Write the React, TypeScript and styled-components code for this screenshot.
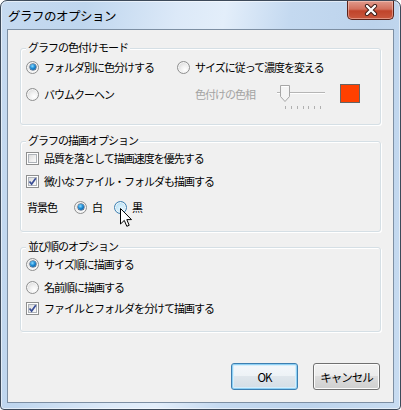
import React from 'react';
import styled, { createGlobalStyle } from 'styled-components';

const GlobalStyle = createGlobalStyle`
  html, body {
    margin: 0;
    padding: 0;
    background: #ffffff;
  }
  body {
    font-family: "Noto Sans CJK JP", "Noto Sans", sans-serif;
    font-size: 11px;
    color: #000;
  }
`;

const Window = styled.div`
  width: 401px;
  height: 410px;
  box-sizing: border-box;
  border: 1px solid #3d4a5a;
  border-radius: 7px 7px 4px 4px;
  background: linear-gradient(
    100deg,
    #c6daf0 0%,
    #bfd6ee 18%,
    #dce9f8 38%,
    #e3eefa 48%,
    #c4d9f0 62%,
    #bcd3ec 80%,
    #c8dcf1 100%
  );
  box-shadow: inset 0 0 0 1px rgba(255, 255, 255, 0.55);
  padding: 0 6px 6px;
  display: flex;
  flex-direction: column;
  overflow: hidden;
`;

const TitleBar = styled.div`
  height: 28px;
  display: flex;
  align-items: center;
  justify-content: space-between;
  padding-left: 1px;
`;

const Title = styled.div`
  font-size: 12.5px;
  letter-spacing: -0.5px;
  line-height: 16px;
  color: #000;
  margin-top: 1px;
`;

const CloseButton = styled.div`
  align-self: flex-start;
  width: 47px;
  height: 19px;
  box-sizing: border-box;
  border: 1px solid #5b231a;
  border-top: none;
  border-radius: 0 0 5px 5px;
  background: linear-gradient(#e09a8c 0%, #d2705d 45%, #c0442b 55%, #c9583e 100%);
  box-shadow: inset 0 0 0 1px rgba(255, 220, 210, 0.45);
  display: flex;
  align-items: center;
  justify-content: center;
`;

const Client = styled.div`
  flex: 1;
  border: 1px solid #7d8fa3;
  background: #f0f0f0;
  padding: 0 12px;
  display: flex;
  flex-direction: column;
`;

const Group = styled.div<{ $mt: number; $h: number }>`
  position: relative;
  margin-top: ${(p) => p.$mt}px;
  height: ${(p) => p.$h}px;
  box-sizing: border-box;
  border: 1px solid #d5dfe5;
  border-radius: 3px;
  box-shadow: inset 1px 1px 0 #ffffff, 1px 1px 0 #ffffff;
  padding: 0 5px;
  display: flex;
  flex-direction: column;
`;

const Legend = styled.div`
  position: absolute;
  top: -10px;
  left: 5px;
  padding: 0 2px;
  background: #f0f0f0;
  line-height: 16px;
  letter-spacing: -1px;
`;

const Row = styled.div<{ $mt: number; $h?: number }>`
  margin-top: ${(p) => p.$mt}px;
  height: ${(p) => p.$h ?? 18}px;
  display: flex;
  align-items: center;
`;

const TwoCols = styled.div`
  display: grid;
  grid-template-columns: 151px 1fr;
  align-items: center;
`;

const Item = styled.label<{ $ml?: number }>`
  position: relative;
  display: flex;
  align-items: center;
  gap: 5px;
  margin-left: ${(p) => p.$ml ?? 0}px;
  line-height: 16px;
  letter-spacing: -1px;
  white-space: nowrap;
`;

const Text = styled.span<{ $disabled?: boolean }>`
  color: ${(p) => (p.$disabled ? '#a3a3a3' : '#000')};
  letter-spacing: -1px;
  line-height: 16px;
  white-space: nowrap;
`;

const RadioCircle = styled.span<{ $checked?: boolean; $hover?: boolean }>`
  position: relative;
  width: 13px;
  height: 13px;
  box-sizing: border-box;
  border-radius: 50%;
  border: 1px solid ${(p) => (p.$hover ? '#3c7fb1' : '#8e8f8f')};
  background: ${(p) =>
    p.$hover
      ? 'radial-gradient(circle at 60% 65%, #eaf6fd 0%, #c9e9f9 45%, #9dd5f3 100%)'
      : 'radial-gradient(circle at 65% 70%, #ffffff 0%, #f0f0f0 40%, #cfcfcf 100%)'};
  box-shadow: inset 0 0 0 1px #f6f6f6;
  flex: none;

  &::after {
    content: '';
    display: ${(p) => (p.$checked ? 'block' : 'none')};
    position: absolute;
    left: 2.5px;
    top: 2.5px;
    width: 6px;
    height: 6px;
    border-radius: 50%;
    background: radial-gradient(circle at 40% 35%, #8fdcff 0%, #1a8ad4 45%, #0b3f7a 100%);
    box-shadow: 0 0 0 0.5px #1e3a5f;
  }
`;

const CheckBox = styled.span`
  width: 13px;
  height: 13px;
  box-sizing: border-box;
  border: 1px solid #8e8f8f;
  background: #fff;
  padding: 1px;
  flex: none;
  display: flex;
`;

const CheckInner = styled.span`
  flex: 1;
  border: 1px solid #aeb3b9;
  background: linear-gradient(135deg, #dcdcdc 0%, #f0f0f0 60%, #fbfbfb 100%);
  position: relative;
  display: flex;
  align-items: center;
  justify-content: center;
`;

const HueBox = styled.div`
  display: flex;
  align-items: flex-start;
  padding-left: 18px;
  height: 20px;
`;

const HueLabel = styled.span`
  width: 81px;
  height: 20px;
  display: flex;
  align-items: center;
  color: #a3a3a3;
  letter-spacing: -1px;
  white-space: nowrap;
`;

const Swatch = styled.div<{ $color: string }>`
  width: 20px;
  height: 19px;
  box-sizing: border-box;
  margin-left: 12px;
  border: 1px solid #646464;
  background: ${(p) => p.$color};
`;

const Cursor = styled.svg`
  position: absolute;
  left: 6px;
  top: 9px;
  pointer-events: none;
`;

const Footer = styled.div`
  margin-top: auto;
  margin-right: 1px;
  padding-bottom: 12px;
  display: flex;
  justify-content: flex-end;
  gap: 15px;
`;

const Button = styled.button<{ $default?: boolean }>`
  width: 67px;
  height: 27px;
  box-sizing: border-box;
  border-radius: 3px;
  border: 1px solid ${(p) => (p.$default ? '#3c7fb1' : '#707070')};
  background: ${(p) =>
    p.$default
      ? 'linear-gradient(#f4f8fb 0%, #edf2f6 49%, #dfe6ec 50%, #d3dde5 100%)'
      : 'linear-gradient(#f2f2f2 0%, #ebebeb 49%, #dddddd 50%, #cfcfcf 100%)'};
  box-shadow: ${(p) =>
    p.$default ? 'inset 0 0 0 1px #8fd0f4, inset 0 0 0 2px #d6eefb' : 'inset 0 0 0 1px #fcfcfc'};
  font-family: "Noto Sans CJK JP", "Noto Sans", sans-serif;
  font-size: 11.5px;
  letter-spacing: -1px;
  color: #000;
  padding: 0;
`;

const Radio: React.FC<{ checked?: boolean; hover?: boolean; label: string; ml?: number; children?: React.ReactNode }> = ({
  checked,
  hover,
  label,
  ml,
  children,
}) => (
  <Item $ml={ml}>
    <RadioCircle $checked={checked} $hover={hover} />
    <Text>{label}</Text>
    {children}
  </Item>
);

const Check: React.FC<{ checked?: boolean; label: string }> = ({ checked, label }) => (
  <Item>
    <CheckBox>
      <CheckInner>
        {checked && (
          <svg width="9" height="9" viewBox="0 0 9 9" style={{ position: 'absolute', left: -1, top: -1 }}>
            <path d="M1.5 4.5 L3.6 7 L7.8 1.2" fill="none" stroke="#3b4f96" strokeWidth="1.7" />
          </svg>
        )}
      </CheckInner>
    </CheckBox>
    <Text>{label}</Text>
  </Item>
);

const Slider: React.FC = () => {
  const ticks = [9, 14.8, 20.7, 26.5, 32.3, 38.2, 44];
  return (
    <svg width="52" height="28" viewBox="0 0 52 28">
      <line x1="1" y1="8.5" x2="49" y2="8.5" stroke="#b5b5b5" strokeWidth="1" />
      <line x1="1" y1="9.5" x2="49" y2="9.5" stroke="#ffffff" strokeWidth="1" />
      <path d="M4.5 1.5 H13.5 V12.5 L9 17.5 L4.5 12.5 Z" fill="#f4f4f4" stroke="#a6a6a6" strokeWidth="1" />
      <path d="M5.5 2.5 H12.5" stroke="#ffffff" strokeWidth="1" />
      {ticks.map((x) => (
        <line key={x} x1={Math.round(x) + 0.5} y1="22" x2={Math.round(x) + 0.5} y2="25" stroke="#b0b0b0" strokeWidth="1" />
      ))}
    </svg>
  );
};

export default function App() {
  return (
    <>
      <GlobalStyle />
      <Window>
        <TitleBar>
          <Title>グラフのオプション</Title>
          <CloseButton>
            <svg width="14" height="12" viewBox="0 0 14 12">
              <path d="M3 2 L11 10 M11 2 L3 10" stroke="#3a1a15" strokeWidth="4.2" strokeLinecap="round" />
              <path d="M3 2 L11 10 M11 2 L3 10" stroke="#ffffff" strokeWidth="2.4" strokeLinecap="round" />
            </svg>
          </CloseButton>
        </TitleBar>
        <Client>
          <Group $mt={18} $h={77}>
            <Legend>グラフの色付けモード</Legend>
            <TwoCols style={{ marginTop: 9 }}>
              <Row $mt={0}>
                <Radio checked label="フォルダ別に色分けする" />
              </Row>
              <Row $mt={0}>
                <Radio label="サイズに従って濃度を変える" />
              </Row>
              <Row $mt={8} $h={20}>
                <Radio label="バウムクーヘン" />
              </Row>
              <Row $mt={8} $h={20}>
                <HueBox>
                  <HueLabel>色付けの色相</HueLabel>
                  <Slider />
                  <Swatch $color="#ff4000" />
                </HueBox>
              </Row>
            </TwoCols>
          </Group>

          <Group $mt={16} $h={91}>
            <Legend>グラフの描画オプション</Legend>
            <Row $mt={7}>
              <Check label="品質を落として描画速度を優先する" />
            </Row>
            <Row $mt={5}>
              <Check checked label="微小なファイル・フォルダも描画する" />
            </Row>
            <Row $mt={8}>
              <Text style={{ marginLeft: 1 }}>背景色</Text>
              <Radio checked label="白" ml={17} />
              <Radio hover label="黒" ml={12}>
                <Cursor width="13" height="20" viewBox="0 0 13 20">
                  <path
                    d="M0.5 0.5 L0.5 16 L4.3 12.4 L6.8 18.3 L9.2 17.3 L6.8 11.6 L11.5 11.6 Z"
                    fill="#ffffff"
                    stroke="#000000"
                    strokeWidth="1"
                    strokeLinejoin="miter"
                  />
                </Cursor>
              </Radio>
            </Row>
          </Group>

          <Group $mt={15} $h={85}>
            <Legend>並び順のオプション</Legend>
            <Row $mt={7}>
              <Radio checked label="サイズ順に描画する" />
            </Row>
            <Row $mt={5}>
              <Radio label="名前順に描画する" />
            </Row>
            <Row $mt={3}>
              <Check checked label="ファイルとフォルダを分けて描画する" />
            </Row>
          </Group>

          <Footer>
            <Button $default>OK</Button>
            <Button>キャンセル</Button>
          </Footer>
        </Client>
      </Window>
    </>
  );
}
